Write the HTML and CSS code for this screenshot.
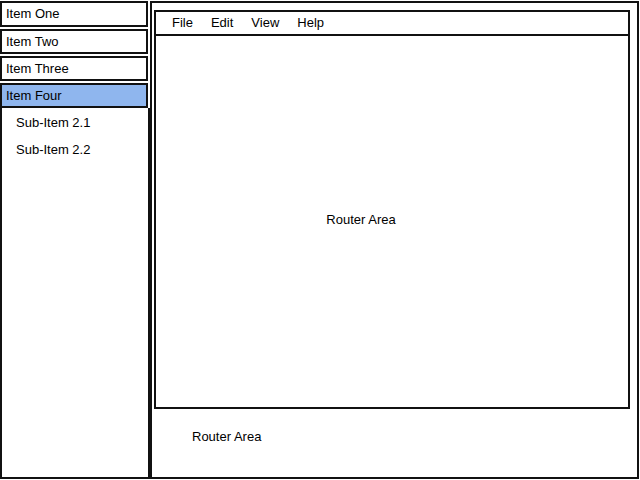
FILE: index.html
```html
<!DOCTYPE html>
<html lang="en">
<head>
  <meta charset="UTF-8" />
  <title>Wireframe</title>
  <link rel="stylesheet" href="styles.css">
</head>
<body>
  <div class="app">
    <nav class="sidebar">
      <div class="nav-item">Item One</div>
      <div class="nav-item">Item Two</div>
      <div class="nav-item">Item Three</div>
      <div class="nav-item active">Item Four</div>
      <div class="sub-list">
        <div class="sub-item">Sub-Item 2.1</div>
        <div class="sub-item">Sub-Item 2.2</div>
      </div>
    </nav>
    <main class="main">
      <div class="window">
        <div class="menubar">
          <span>File</span>
          <span>Edit</span>
          <span>View</span>
          <span>Help</span>
        </div>
        <div class="router">Router Area</div>
      </div>
      <div class="footer-router">Router Area</div>
    </main>
  </div>
</body>
</html>
```

FILE: styles.css
```css
body {
  margin: 0;
  background: #fff;
  color: #000;
  font-family: 'Liberation Sans', Arial, sans-serif;
  font-size: 13px;
}

.app {
  display: flex;
  width: 640px;
  height: 480px;
  box-sizing: border-box;
  padding: 1px 1px 1px 0;
}

.sidebar {
  width: 150px;
  display: flex;
  flex-direction: column;
  gap: 2px;
}

.nav-item {
  height: 25px;
  box-sizing: border-box;
  border: 2px solid #111;
  padding-left: 4px;
  display: flex;
  align-items: center;
  margin-right: 2px;
  background: #fff;
}

.nav-item:first-child {
  height: 26px;
  padding-bottom: 2px;
}

.nav-item.active {
  background: #8fb6ee;
}

.sub-list {
  flex: 1;
  border: 2px solid #111;
  border-top: none;
  margin-top: -2px;
  padding: 1px 0 0 14px;
}

.sub-item {
  height: 27px;
  line-height: 27px;
}

.main {
  flex: 1;
  border: 2px solid #111;
  display: flex;
  flex-direction: column;
  padding: 7px 7px 0 2px;
}

.window {
  height: 399px;
  box-sizing: border-box;
  border: 2px solid #111;
  display: flex;
  flex-direction: column;
}

.menubar {
  height: 20px;
  border-bottom: 2px solid #111;
  display: flex;
  align-items: center;
  gap: 18px;
  padding: 0 0 2px 16px;
}

.router {
  flex: 1;
  display: flex;
  align-items: center;
  justify-content: center;
  padding: 0 62px 4px 0;
}

.footer-router {
  padding: 20px 0 0 38px;
}
```
